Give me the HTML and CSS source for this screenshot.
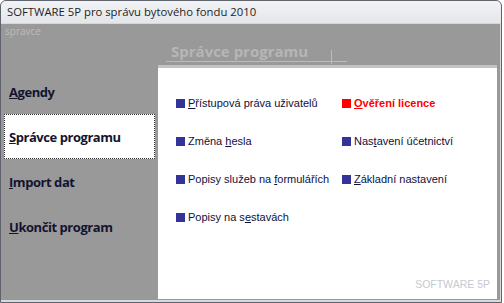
FILE: index.html
```html
<!DOCTYPE html>
<html lang="cs">
<head>
    <meta charset="UTF-8">
    <title>SOFTWARE 5P pro správu bytového fondu 2010</title>
    <link rel="stylesheet" href="styles.css">
</head>
<body>

    <div class="window">
        <div class="titlebar">SOFTWARE 5P pro správu bytového fondu 2010</div>

        <div class="client">
            <div class="user-name">spravce</div>

            <div class="main">
                <div class="menu">
                    <div class="menu-item"><u>A</u>gendy</div>
                    <div class="menu-item selected"><u>S</u>právce programu</div>
                    <div class="menu-item"><u>I</u>mport dat</div>
                    <div class="menu-item"><u>U</u>končit program</div>
                </div>

                <div class="content">
                    <div class="heading">Správce programu</div>

                    <div class="panel">
                        <div class="links">
                            <div class="link"><span class="bullet"></span><span><u>P</u>řístupová práva uživatelů</span></div>
                            <div class="link warn"><span class="bullet"></span><span><u>O</u>věření licence</span></div>
                            <div class="link"><span class="bullet"></span><span>Změna <u>h</u>esla</span></div>
                            <div class="link"><span class="bullet"></span><span>Nas<u>t</u>avení účetnictví</span></div>
                            <div class="link"><span class="bullet"></span><span>Popisy služeb na <u>f</u>ormulářích</span></div>
                            <div class="link"><span class="bullet"></span><span><u>Z</u>ákladní nastavení</span></div>
                            <div class="link"><span class="bullet"></span><span>Popisy na s<u>e</u>stavách</span></div>
                        </div>
                        <div class="brand">SOFTWARE 5P</div>
                    </div>
                </div>
            </div>
        </div>
    </div>

</body>
</html>
```

FILE: styles.css
```css
body {
    margin: 0;
    padding: 0;
    background-color: #ffffff;
    font-family: 'Open Sans', 'Liberation Sans', sans-serif;
}

.window {
    width: 500px;
    height: 301px;
    border: 1px solid #5f646c;
    border-radius: 6px 6px 0 0;
    background: #999999;
    display: flex;
    flex-direction: column;
    overflow: hidden;
}

.titlebar {
    height: 23px;
    line-height: 22px;
    padding-left: 6px;
    font-size: 11.3px;
    color: #1e1e1e;
    background: linear-gradient(#f2f3f6, #e4e6ea);
    border-bottom: 1px solid #d4d7dc;
    box-sizing: border-box;
}

.client {
    flex: 1;
    display: flex;
    flex-direction: column;
    border-bottom: 2px solid #d9dadc;
    border-right: 1px solid #d9dadc;
}

.user-name {
    height: 14px;
    padding-left: 4px;
    font-size: 10px;
    line-height: 14px;
    color: #bdbdbd;
}

.main {
    flex: 1;
    display: flex;
}

.menu {
    width: 157px;
    padding-top: 31px;
}

.menu-item {
    height: 45px;
    line-height: 44px;
    margin-left: 3px;
    width: 151px;
    box-sizing: border-box;
    padding-left: 4px;
    font-size: 13px;
    letter-spacing: -0.45px;
    font-weight: 700;
    color: #141430;
    border: 1px dotted transparent;
}

.menu-item.selected {
    background: #ffffff;
    border-color: #333333;
}

.content {
    flex: 1;
    display: flex;
    flex-direction: column;
}

.heading {
    position: relative;
    width: 181px;
    margin-left: 8px;
    margin-top: 4px;
    padding-left: 5px;
    box-sizing: border-box;
    font-size: 15px;
    font-weight: 700;
    line-height: 19px;
    color: #b6b6b6;
    border-bottom: 1px solid #bcbcbc;
}

.heading::after {
    content: "";
    position: absolute;
    right: 15px;
    top: 8px;
    height: 14px;
    border-left: 1px solid #bcbcbc;
}

.panel {
    flex: 1;
    margin: 3px 3px 1px 0;
    background: #ffffff;
    border-top: 3px solid #c4c4c4;
    display: flex;
    flex-direction: column;
    padding: 16px 7px 9px 18px;
}

.links {
    display: grid;
    grid-template-columns: 166px 1fr;
    grid-auto-rows: 38px;
}

.link {
    display: flex;
    align-items: center;
    gap: 3px;
    font-family: 'Liberation Sans', sans-serif;
    font-size: 11px;
    color: #10103c;
}

.bullet {
    width: 9px;
    height: 9px;
    background: #333399;
    flex-shrink: 0;
}

.link.warn {
    color: #ff0000;
    font-weight: 700;
}

.link.warn .bullet {
    background: #ff0000;
}

.brand {
    margin-top: auto;
    text-align: right;
    font-family: 'Liberation Sans', sans-serif;
    font-size: 10.5px;
    color: #c8c8d0;
}
```
